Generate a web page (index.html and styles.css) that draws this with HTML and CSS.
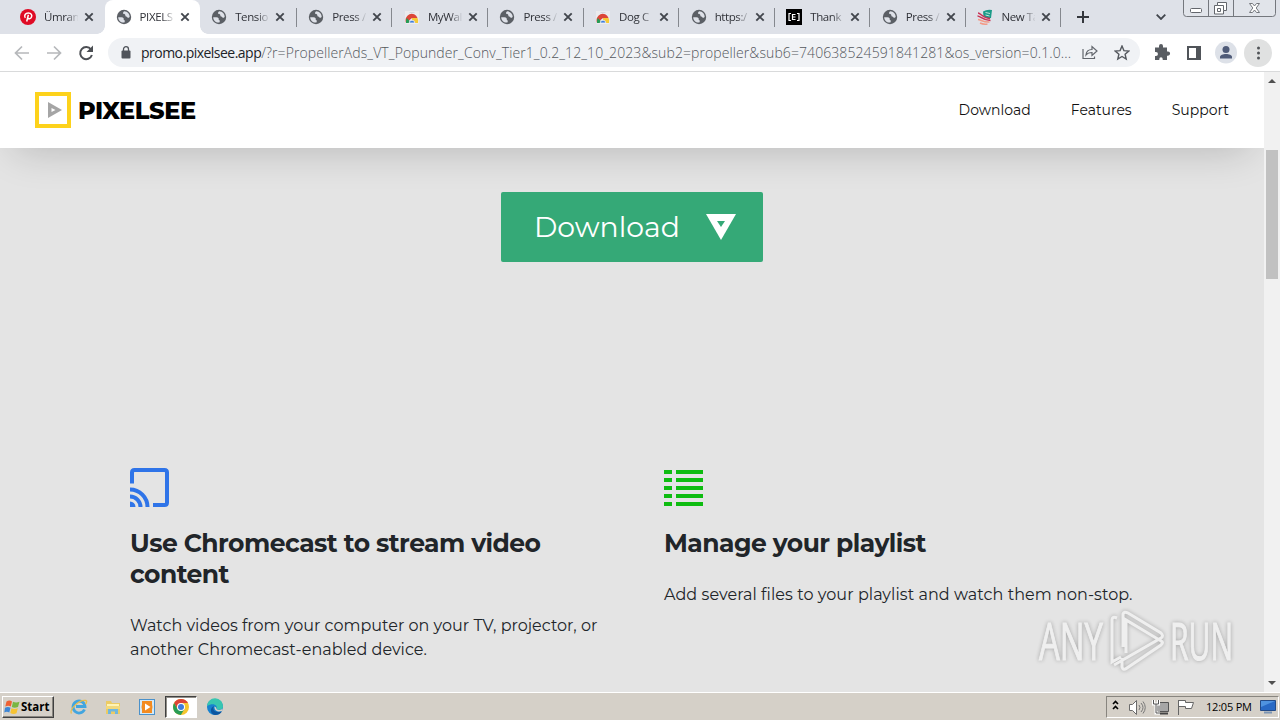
FILE: index.html
```html
<!DOCTYPE html>
<html lang="en">
<head>
    <meta charset="UTF-8">
    <meta name="viewport" content="width=device-width, initial-scale=1.0">
    <title>PIXELSEE</title>
    <link rel="stylesheet" href="styles.css">
</head>
<body>
    <!-- shared icons -->
    <svg class="defs" width="0" height="0">
        <symbol id="globe" viewBox="0 0 16 16">
            <circle cx="8" cy="8" r="7.2" fill="#5b5f65"/>
            <path d="M2.2 8.2c2 .1 4.8-.2 5.4 1 .4.8-.3 1.3.5 1.7.8.3.9 1.300.3 2.600C5 14 2.200 11.500 2.200 8.200zM8.300 2.300c-1.200.7-1.500 1.600-1.100 2.300.6.9 1.600.3 2 1.200.3.900-.1 1.500.9 1.700 1.200.3 1.300 1.400 2.300 1.300.800 0 1.200-.700 1.300-1.300-.1-2.500-2-4.900-5.400-5.200z" fill="#dee1e8"/>
        </symbol>
        <symbol id="store" viewBox="0 0 16 16">
            <path d="M1 2h14v12l-1 1H2l-1-1z" fill="#ebebee"/>
            <path d="M5.500 3.500h5" stroke="#d4d6db"/>
            <path d="M2 14a6 6.500 0 0 1 11.500-5H8z" fill="#dc4638"/>
            <path d="M2 14a6.500 6.500 0 0 1 .8-5L7.500 14z" fill="#279b55"/>
            <path d="M8 9h5.500a6.500 6.500 0 0 1 .5 5H8z" fill="#f6ca36"/>
            <path d="M5.200 14a2.800 2.800 0 0 1 5.600 0z" fill="#3f7edc" stroke="#f4f4f4" stroke-width=".8"/>
        </symbol>
        <symbol id="close" viewBox="0 0 10 10">
            <path d="M1.300 1.300l7.400 7.400M8.700 1.300L1.300 8.700" stroke="#42464d" stroke-width="1.900"/>
        </symbol>
    </svg>

    <div class="tabstrip">
        <div class="tabs">
            <div class="tab">
                <svg class="favicon" viewBox="0 0 16 16"><circle cx="8" cy="8" r="8" fill="#df0b25"/><path d="M6.700 12.500l1.700-6.700M5.300 8.900C3.700 6.500 5.500 3.900 8.300 3.900c3 0 4.100 2.400 3.100 4.300-.8 1.700-2.900 1.900-3.600.7" fill="none" stroke="#fff" stroke-width="1.500"/></svg>
                <span class="title">Ümrani</span><svg class="x"><use href="#close"/></svg>
            </div>
            <div class="tab active"><svg class="favicon"><use href="#globe"/></svg><span class="title">PIXELS</span><svg class="x"><use href="#close"/></svg></div>
            <div class="tab"><svg class="favicon"><use href="#globe"/></svg><span class="title">Tension</span><svg class="x"><use href="#close"/></svg></div>
            <div class="tab sep"><svg class="favicon"><use href="#globe"/></svg><span class="title">Press /</span><svg class="x"><use href="#close"/></svg></div>
            <div class="tab sep"><svg class="favicon"><use href="#store"/></svg><span class="title">MyWal</span><svg class="x"><use href="#close"/></svg></div>
            <div class="tab sep"><svg class="favicon"><use href="#globe"/></svg><span class="title">Press /</span><svg class="x"><use href="#close"/></svg></div>
            <div class="tab sep"><svg class="favicon"><use href="#store"/></svg><span class="title">Dog C</span><svg class="x"><use href="#close"/></svg></div>
            <div class="tab sep"><svg class="favicon"><use href="#globe"/></svg><span class="title">https:/</span><svg class="x"><use href="#close"/></svg></div>
            <div class="tab sep">
                <svg class="favicon" viewBox="0 0 16 16"><path d="M0 0h16v16H0z"/><path d="M5 4.500H3v7h2M11 4.500h2v7h-2M9.500 5.500h-3v5h3M6.500 8h3" fill="none" stroke="#fff" stroke-width="1.200"/></svg>
                <span class="title">Thank</span><svg class="x"><use href="#close"/></svg>
            </div>
            <div class="tab sep"><svg class="favicon"><use href="#globe"/></svg><span class="title">Press /</span><svg class="x"><use href="#close"/></svg></div>
            <div class="tab sep last">
                <svg class="favicon" viewBox="0 0 16 16"><path d="M6 2.500Q10 0 15 1l-1 8q-5 1-7.500-2z" fill="#1b9b88"/><path d="M8.500 3.500l4.500 1M8.500 6l4 1" stroke="#bfe3dd"/><path d="M1 4c3 0 4 5 12 5.500M.5 7c3 0 5 4.500 13 4.500" fill="none" stroke="#c83255" stroke-width="1.500"/><path d="M1 10.500c3 .5 6 3 11.500 2.500M3 14c2 1 5 1.500 7.500 1" fill="none" stroke="#f39a86" stroke-width="1.500"/></svg>
                <span class="title">New Ta</span><svg class="x"><use href="#close"/></svg>
            </div>
        </div>
        <svg class="plus" viewBox="0 0 12 12"><path d="M6 0v12M0 6h12" stroke="#34373d" stroke-width="2"/></svg>
        <svg class="chevron" viewBox="0 0 10 6"><path d="M.7.700L5 5 9.300.7" fill="none" stroke="#42464d" stroke-width="1.800"/></svg>
        <svg class="window-buttons" viewBox="0 0 93 18">
            <path d="M.5 0v13.500q0 3 3 3h86q3 0 3-3V0M25.500 0v16M50.500 0v16" fill="#e1e4ea" stroke="#74777d"/>
            <rect x="7.500" y="8.500" width="11" height="4" rx="1" fill="#fff" stroke="#63666c"/>
            <path d="M34.500 2.500h9v8h-3v3.500h-9V5.500h3z" fill="#fff" stroke="#63666c"/>
            <path d="M34.500 5.500h6v5M34.500 8.500h3v3h-3z" fill="none" stroke="#63666c"/>
            <path d="M66.500 3.500h3l2 2.500 2-2.500h3L73.200 8l3.300 4.500h-3l-2-2.500-2 2.500h-3L69.800 8z" fill="#fff" stroke="#74777d"/>
        </svg>
    </div>

    <div class="toolbar">
        <svg class="nav-icons" viewBox="0 0 108 32">
            <path d="M29 16H16M22 9.500L15.500 16l6.500 6.500M47 16h13M54 9.500l6.500 6.500-6.500 6.500" fill="none" stroke="#b6b8bb" stroke-width="1.700"/>
            <path d="M91 12.500a6 6 0 1 0 .9 5.500" fill="none" stroke="#4c4f54" stroke-width="2"/>
            <path d="M93 8.500v6.500h-6.500z" fill="#4c4f54"/>
        </svg>
        <div class="address">
            <svg class="lock" viewBox="0 0 10 13"><rect x=".5" y="4.500" width="9" height="8" rx="1" fill="#50545b"/><path d="M2.500 5V3.200a2.500 2.500 0 0 1 5 0V5" fill="none" stroke="#50545b" stroke-width="1.300"/></svg>
            <div class="url"><span class="host">promo.pixelsee.app</span><span class="path">/?r=PropellerAds_VT_Popunder_Conv_Tier1_0.2_12_10_2023&amp;sub2=propeller&amp;sub6=740638524591841281&amp;os_version=0.1.0...</span></div>
            <svg class="share" viewBox="0 0 16 16"><path d="M1 4v9.500h11.500v-2M4 10c.3-4 3-5.500 6-5.500V1.500l5 4.500-5 4.500V7.500c-3 0-4.500.5-6 2.500z" fill="none" stroke="#62666c" stroke-width="1.200"/></svg>
            <svg class="star" viewBox="0 0 16 16"><path d="M8 1l1.900 4.600 4.900.4-3.700 3.200 1.100 4.800L8 11.500l-4.200 2.500 1.100-4.800L1.200 6l4.900-.4z" fill="none" stroke="#55595f" stroke-width="1.400"/></svg>
        </div>
        <svg class="tool-icons" viewBox="0 0 132 32">
            <path d="M7 10.500h4V9a2 2 0 0 1 4 0v1.500h4v4h1a2 2 0 0 1 0 4.200h-1v4.300h-4.300v-1a1.700 1.700 0 0 0-3.400 0v1H7v-4h1a1.900 1.900 0 0 0 0-3.900H7z" fill="#595d62"/>
            <rect x="40" y="10" width="12" height="12" fill="none" stroke="#505459" stroke-width="2"/><path d="M48 9h5v14h-5z" fill="#505459"/>
            <circle cx="78" cy="15.500" r="11" fill="#dde1e8"/><circle cx="78" cy="12.500" r="3.500" fill="#4f5b78"/><path d="M72 21.500v-1.500c0-4 12-4 12 0v1.500z" fill="#4f5b78"/>
            <circle cx="110" cy="16" r="14" fill="#e0e1e1"/><circle cx="110.500" cy="11" r="1.500" fill="#505357"/><circle cx="110.500" cy="16" r="1.500" fill="#505357"/><circle cx="110.500" cy="21" r="1.500" fill="#505357"/>
        </svg>
    </div>

    <div class="viewport">
        <div class="page">
            <header class="site-header">
                <div class="logo">
                    <svg class="logo-mark" viewBox="0 0 36 36"><rect x="2" y="2" width="32" height="32" fill="#fff" stroke="#fdd21b" stroke-width="4"/><path d="M13 10l14 8-14 8z" fill="#a5a5a5"/><path d="M16.500 16l4 2-4 2z" fill="#fff"/></svg>
                    <span class="logo-text">PIXELSEE</span>
                </div>
                <nav class="menu">
                    <a>Download</a>
                    <a>Features</a>
                    <a>Support</a>
                </nav>
            </header>

            <div class="hero">
                <a class="download-button"><span>Download</span><svg viewBox="0 0 30 26"><path d="M0 0h30L15 26z" fill="#fff"/><path d="M11 7h8l-4 6z" fill="#35a977"/></svg></a>
            </div>

            <div class="features">
                <div class="feature">
                    <svg class="feature-icon" viewBox="0 0 39 40"><g fill="none" stroke="#2f74e8" stroke-width="4"><path d="M2 15.500V4.500Q2 2 4.500 2h30Q37 2 37 4.500v30q0 2.500-2.500 2.500H23"/><path d="M0 21.500A17.500 17.500 0 0 1 17.500 39M0 28.500A10.500 10.500 0 0 1 10.500 39"/></g><path d="M0 33.500A5.500 5.500 0 0 1 5.500 39H0z" fill="#2f74e8"/></svg>
                    <h3>Use Chromecast to stream video<br>content</h3>
                    <p>Watch videos from your computer on your TV, projector, or<br>another Chromecast-enabled device.</p>
                </div>
                <div class="feature playlist">
                    <svg class="feature-icon" viewBox="0 0 39 40"><path d="M0 4h8M12 4h27M0 12h8M12 12h27M0 20h8M12 20h27M0 28h8M12 28h27M0 36h8M12 36h27" stroke="#0ebc10" stroke-width="4"/></svg>
                    <h3>Manage your playlist</h3>
                    <p>Add several files to your playlist and watch them non-stop.</p>
                </div>
            </div>
        </div>
        <div class="scrollbar">
            <svg viewBox="0 0 8 4"><path d="M0 4l4-4 4 4z" fill="#505050"/></svg>
            <div class="thumb"></div>
            <svg viewBox="0 0 8 4"><path d="M0 0l4 4 4-4z" fill="#505050"/></svg>
        </div>
    </div>

    <div class="taskbar">
        <div class="start">
            <svg viewBox="0 0 16 16"><path d="M2.500 2.500q3-2 5.500 0L6.800 7.500q-2.500-1.500-5.500 0z" fill="#ee6133"/><path d="M9 2.800q3 1.500 6.500 0L14 8q-3.500 1.500-6.200 0z" fill="#79b643"/><path d="M1 8.700q3-1.500 5.500 0L5.300 13.500q-2.500-1.500-5 0z" fill="#3d86d5"/><path d="M7.500 9.200q3 1.500 6.300 0L12.500 14.200q-3 1.500-6.200-.2z" fill="#f6c332"/></svg>
            <span>Start</span>
        </div>
        <div class="apps">
            <div class="app"><svg viewBox="0 0 18 18"><path d="M14.500 11.500A6 6 0 1 1 15 8.500H6" fill="none" stroke="#42a5df" stroke-width="2.800"/><path d="M1.500 15.500C-1 12 9 1 16 2.500c1.500.5 0 3-.5 3.500" fill="none" stroke="#e7bd4c" stroke-width="1.300"/></svg></div>
            <div class="app"><svg viewBox="0 0 18 18"><path d="M2 3h5l1 2h8v11H2z" fill="#eccb64"/><path d="M3 6h12v5H3z" fill="#fff3b4"/><path d="M2 8h14v3H2z" fill="#f2d97c"/><path d="M4 16v-5h10v5h-3v-2.500H7V16z" fill="#6fb7df"/></svg></div>
            <div class="app"><svg viewBox="0 0 18 18"><rect x="1.500" y="1.500" width="15" height="15" fill="#d4e9f6" stroke="#4b91ca"/><path d="M4 3h10v12H4z" fill="#f38b20"/><circle cx="9" cy="9" r="5.500" fill="#f38b20"/><path d="M7 5.500l5.500 3.500L7 12.500z" fill="#fff"/></svg></div>
            <div class="app pressed"><svg viewBox="0 0 18 18"><circle cx="9" cy="9" r="8" fill="#f5c52e"/><path d="M2.100 5A8 8 0 0 1 16 5H9L5.500 11z" fill="#dc4437"/><path d="M2.100 5A8 8 0 0 0 8.800 17l3.700-6L5.500 11z" fill="#289c55"/><circle cx="9" cy="9" r="4" fill="#fff"/><circle cx="9" cy="9" r="3" fill="#3e7cdc"/></svg></div>
            <div class="app"><svg viewBox="0 0 18 18"><circle cx="9" cy="9" r="8" fill="#1782cf"/><path d="M1 8A8 8 0 0 1 17 8.500c0 3.500-5 4-6.500 2.500C12 8 8 4 1 8z" fill="#38c6b0"/><path d="M8 8c-2 4 1 7 8 5.500-1.500 2.500-4 3.500-7 3.500-5-1-5.500-7-1-9z" fill="#0c559f"/><path d="M8.500 8.500c1.500.5 2 1.500 2 2.500 1.500 1.500 5 1 6.300-.5l-.8 2.500c-4 1.500-8-.5-7.500-4.500z" fill="#d5d0c8"/></svg></div>
        </div>
        <div class="tray">
            <svg class="tray-icons" viewBox="0 0 88 20">
                <path d="M6 7l2.500-2.500L11 7M6 12l2.500-2.500L11 12" fill="none" stroke="#000" stroke-width="1.600"/>
                <path d="M22.500 7.500h3l4-4v14l-4-4h-3z" fill="#fff" stroke="#6b6b6b"/><path d="M32 8q2 2.500 0 5M34 6q4 4.500 0 9M36 4.500q4.500 6 0 12" fill="none" stroke="#777"/>
                <path d="M50.500 5.500h11v9h-11z" fill="#a6a6a6" stroke="#555"/><path d="M53 16.500h8" stroke="#444" stroke-width="2"/><path d="M46.500 3v4h5V3M49 7v9h4" fill="none" stroke="#fff" stroke-width="3"/><path d="M46.500 3v4h5V3M49 7v9h4" fill="none" stroke="#555"/>
                <path d="M71.500 3v15M71.500 3.500h7v2h8l-2 6h-6v-2h-7z" fill="#fff" stroke="#666"/>
            </svg>
            <span class="clock">12:05 PM</span>
            <svg class="desktop" viewBox="0 0 16 14"><path d="M.5.5h15v10H.5z" fill="#2869c5" stroke="#234b88"/><path d="M1 1h14L1 7z" fill="#4f93e0"/><path d="M4 12.500h8" stroke="#7c95b3" stroke-width="2"/></svg>
        </div>
    </div>

    <svg class="watermark" viewBox="0 0 200 64">
        <g fill="#f5f5f5" stroke="#f5f5f5">
            <text x="4" y="51" textLength="64" lengthAdjust="spacingAndGlyphs">ANY</text>
            <text x="135" y="51" textLength="63" lengthAdjust="spacingAndGlyphs">RUN</text>
        </g>
        <path d="M82 9q-5-2-5 2v42l9-5M88 38V5q1-3 5-1l33 20q3 3 0 5L79 56M87 49v9q1 4 5 1l34-23q3-3 0-4L91 11v33" fill="none" stroke="#f5f5f5" stroke-width="3"/>
    </svg>
</body>
</html>
```

FILE: styles.css
```css
* {
    margin: 0;
    padding: 0;
    box-sizing: border-box;
}

body {
    width: 1280px;
    height: 720px;
    overflow: hidden;
    display: flex;
    flex-direction: column;
    font-family: "Open Sans", sans-serif;
    background: #e4e4e4;
}

svg {
    display: block;
    flex-shrink: 0;
}

.defs {
    position: absolute;
}

/* tabs */
.tabstrip {
    height: 34px;
    background: #dee1e8;
    display: flex;
    align-items: center;
    flex-shrink: 0;
}

.tabs {
    display: grid;
    grid-template-columns: repeat(11, 95.6px);
    width: 1061px;
    height: 34px;
    padding-left: 9px;
}

.tab {
    display: flex;
    align-items: center;
    padding-left: 11px;
    position: relative;
}

.tab.active {
    background: #fff;
    border-radius: 8px 8px 0 0;
}

.tab.active::before,
.tab.active::after {
    content: "";
    position: absolute;
    bottom: 0;
    width: 8px;
    height: 8px;
}

.tab.active::before {
    left: -8px;
    background: radial-gradient(circle at 0 0, #dee1e8 7.5px, #fff 8px);
}

.tab.active::after {
    right: -8px;
    background: radial-gradient(circle at 100% 0, #dee1e8 7.5px, #fff 8px);
}

.tab.sep {
    padding-left: 12.5px;
    background: linear-gradient(#85888e, #85888e) 0 8px / 1px 19px no-repeat;
}

.tab.last {
    background:
        linear-gradient(#85888e, #85888e) 0 8px / 1px 19px no-repeat,
        linear-gradient(#85888e, #85888e) 100% 8px / 1px 19px no-repeat;
}

.favicon {
    width: 16px;
    height: 16px;
}

.title {
    width: 34px;
    margin-left: 8px;
    white-space: nowrap;
    font-size: 11.5px;
    letter-spacing: -0.4px;
    line-height: 18px;
    color: #303238;
    -webkit-mask-image: linear-gradient(90deg, #000 22px, transparent 35px);
    mask-image: linear-gradient(90deg, #000 22px, transparent 35px);
}

.x {
    width: 10px;
    height: 10px;
    margin-left: 6px;
}

.plus {
    width: 12px;
    height: 12px;
    margin-left: 16px;
}

.chevron {
    width: 10px;
    height: 6px;
    margin-left: 67px;
}

.window-buttons {
    width: 93px;
    height: 18px;
    margin-left: 17px;
    align-self: flex-start;
}

/* toolbar */
.toolbar {
    height: 38px;
    background: #fff;
    border-bottom: 1px solid #d9dadb;
    display: flex;
    flex-shrink: 0;
    align-items: center;
}

.nav-icons {
    width: 108px;
    height: 32px;
}

.address {
    width: 1032px;
    height: 29px;
    border-radius: 15px;
    background: #f0f2f5;
    display: flex;
    align-items: center;
    padding-left: 13px;
}

.lock {
    width: 10px;
    height: 13px;
}

.url {
    width: 931px;
    margin-left: 10px;
    white-space: nowrap;
    font-size: 14px;
    font-weight: 300;
    line-height: 20px;
    display: flex;
}

.host {
    color: #202328;
    font-weight: 400;
    letter-spacing: -0.52px;
}

.path {
    color: #54585d;
    letter-spacing: 0.09px;
}

.share {
    width: 16px;
    height: 16px;
    margin-left: 10px;
}

.star {
    width: 16px;
    height: 16px;
    margin-left: 16px;
}

.tool-icons {
    width: 132px;
    height: 32px;
    margin-left: 8px;
}

/* page */
.viewport {
    height: 620px;
    display: flex;
    flex-shrink: 0;
    overflow: hidden;
}

.page {
    width: 1264px;
    overflow: hidden;
    background: #e4e4e4;
    font-family: Montserrat, Inter, sans-serif;
    color: #212529;
}

.site-header {
    height: 76px;
    background: #fff;
    padding: 0 35px;
    display: flex;
    align-items: center;
    justify-content: space-between;
    box-shadow: 0 16px 40px -14px rgba(0, 0, 0, 0.2);
}

.logo {
    display: flex;
    align-items: center;
    gap: 7px;
}

.logo-mark {
    width: 36px;
    height: 36px;
}

.logo-text {
    padding-top: 2px;
    color: #000;
    font-size: 24px;
    font-weight: 800;
    letter-spacing: -0.4px;
    line-height: 30px;
}

.menu {
    display: flex;
    gap: 40px;
    color: #111;
    font-size: 14px;
}

.hero {
    height: 318px;
    padding-top: 44px;
    display: flex;
    justify-content: center;
}

.download-button {
    width: 262px;
    height: 70px;
    background: #35a977;
    border-radius: 2px;
    padding: 0 27px 0 33px;
    display: flex;
    align-items: center;
    justify-content: space-between;
    color: #fff;
    font-size: 28.3px;
}

.download-button svg {
    width: 30px;
    height: 26px;
}

.features {
    display: grid;
    grid-template-columns: 534px 1fr;
    padding-left: 130px;
}

.feature-icon {
    width: 39px;
    height: 40px;
    margin-top: 2px;
}

.feature h3 {
    margin-top: 20px;
    font-size: 25px;
    font-weight: 700;
    letter-spacing: -0.53px;
    line-height: 31px;
    white-space: nowrap;
}

.feature p {
    margin-top: 24px;
    font-size: 16px;
    line-height: 24px;
    white-space: nowrap;
}

.playlist p {
    letter-spacing: 0.06px;
}

.scrollbar {
    width: 16px;
    background: #f1f1f1;
    display: flex;
    flex-direction: column;
    align-items: center;
    padding: 7px 0;
}

.scrollbar svg {
    width: 8px;
    height: 4px;
}

.thumb {
    width: 12px;
    height: 129px;
    background: #c1c1c1;
    margin: 67px 0 auto;
}

/* taskbar */
.taskbar {
    height: 28px;
    background: #d5d0c8;
    border-top: 1px solid #fff;
    display: flex;
    align-items: center;
    padding: 0 1px 0 2px;
}

.start {
    width: 52px;
    height: 22px;
    border: 1px solid;
    border-color: #fff #404040 #404040 #fff;
    box-shadow: inset -1px -1px #88857f;
    display: flex;
    align-items: center;
    gap: 1px;
    padding-left: 1px;
    font-size: 11.5px;
    font-weight: 700;
    color: #000;
}

.start svg {
    width: 16px;
    height: 16px;
}

.apps {
    display: flex;
    margin-left: 9px;
    gap: 2px;
}

.app {
    width: 32px;
    height: 22px;
    display: flex;
    align-items: center;
    justify-content: center;
}

.app svg {
    width: 18px;
    height: 18px;
}

.pressed {
    background: #fff;
    border: 1px solid;
    border-color: #404040 #fff #fff #404040;
    box-shadow: inset 1px 1px #918e88;
}

.tray {
    width: 173px;
    height: 22px;
    margin-left: auto;
    border: 1px solid;
    border-color: #88857f #fff #fff #88857f;
    display: flex;
    align-items: center;
}

.tray-icons {
    width: 88px;
    height: 20px;
}

.clock {
    width: 46px;
    margin-left: 11px;
    font-size: 11px;
    letter-spacing: -0.2px;
    color: #000;
    white-space: nowrap;
}

.desktop {
    width: 16px;
    height: 14px;
    margin-left: 8px;
}

/* lies over the page */
.watermark {
    position: absolute;
    left: 1035px;
    top: 609px;
    width: 200px;
    height: 64px;
    opacity: 0.7;
    filter: drop-shadow(0 0 2px rgba(0, 0, 0, 0.4));
    font-family: "Open Sans", sans-serif;
    font-size: 51px;
}
```
